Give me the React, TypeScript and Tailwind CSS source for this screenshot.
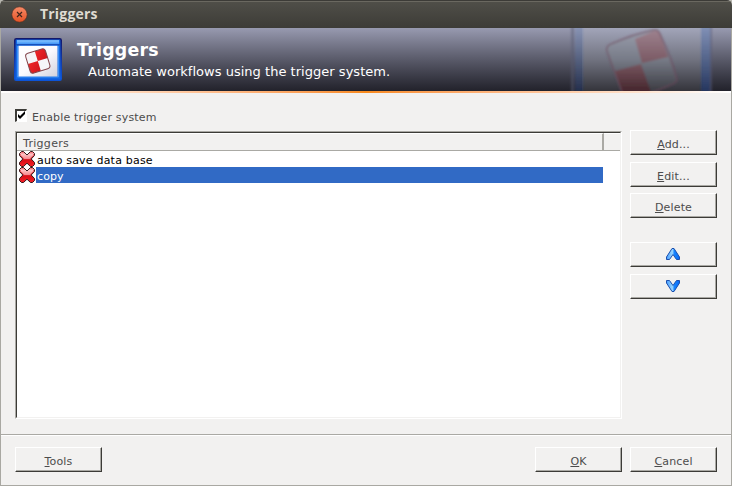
import type { ReactNode } from "react";

function Mnemonic({ text }: { text: string }) {
  return (
    <span className="tracking-[0.15px]">
      <span className="underline decoration-[#4c4c4c] decoration-1 underline-offset-1 [text-decoration-skip-ink:none]">{text[0]}</span>
      {text.slice(1)}
    </span>
  );
}

function Button({ children }: { children: ReactNode }) {
  return (
    <button className="h-[25px] w-[87px] shrink-0 border border-t-white border-r-[#3c3b37] border-b-[#3c3b37] border-l-white bg-[#f2f1f0]">
      <span className="flex h-full w-full items-center justify-center border-r border-b border-[#aaa9a4] pt-[4px] pl-px leading-[13px]">
        {children}
      </span>
    </button>
  );
}

function WindowIcon() {
  return (
    <svg width="48" height="43" viewBox="0 0 48 43">
      <defs>
        <linearGradient id="bar" x1="0" y1="0" x2="0" y2="1">
          <stop offset="0" stopColor="#8ccaff" />
          <stop offset="1" stopColor="#3b90f5" />
        </linearGradient>
        <linearGradient id="pane" x1="0" y1="0" x2="1" y2="1">
          <stop offset="0" stopColor="#ffffff" />
          <stop offset="0.5" stopColor="#fafaff" />
          <stop offset="1" stopColor="#d2d2dc" />
        </linearGradient>
        <linearGradient id="frame" x1="0" y1="0" x2="0" y2="1">
          <stop offset="0" stopColor="#14186a" />
          <stop offset="0.5" stopColor="#1238a4" />
          <stop offset="1" stopColor="#0c54d8" />
        </linearGradient>
        <linearGradient id="tile" x1="0" y1="0" x2="1" y2="1">
          <stop offset="0" stopColor="#ff3030" />
          <stop offset="1" stopColor="#c00d16" />
        </linearGradient>
      </defs>
      <rect x="0.8" y="0.8" width="46.4" height="41.4" rx="1.5" fill="#1266e4" stroke="url(#frame)" strokeWidth="1.6" />
      <rect x="3" y="2.2" width="42" height="4" fill="url(#bar)" />
      <rect x="2" y="6" width="44" height="1.3" fill="#1650bb" />
      <path d="M3.5 8v31h41V8" fill="none" stroke="#3d92f4" />
      <rect x="4.5" y="7.8" width="39" height="30.7" fill="url(#pane)" />
      <g transform="translate(23.8 23) rotate(-17)">
        <rect x="-10.3" y="-10.3" width="20.6" height="20.6" rx="3" fill="#f5f5f8" />
        <path d="M0-10.3h7.3a3 3 0 0 1 3 3V0H0zM0 10.3h-7.3a3 3 0 0 1-3-3V0H0z" fill="url(#tile)" />
        <rect x="-10.3" y="-10.3" width="20.6" height="20.6" rx="3" fill="none" stroke="#83454c" strokeWidth="1" />
      </g>
    </svg>
  );
}

function BannerArt() {
  return (
    <svg className="absolute top-0 right-0" width="162" height="63" viewBox="0 0 162 63">
      <defs>
        <linearGradient id="shade" x1="0" y1="0" x2="0" y2="1">
          <stop offset="0" stopColor="#a2a5b9" />
          <stop offset="0.5" stopColor="#717380" />
          <stop offset="1" stopColor="#34343b" />
        </linearGradient>
        <linearGradient id="edge" x1="0" y1="0" x2="0" y2="1">
          <stop offset="0" stopColor="#8394bb" />
          <stop offset="0.5" stopColor="#53658e" />
          <stop offset="1" stopColor="#20335f" />
        </linearGradient>
        <linearGradient id="red" gradientUnits="userSpaceOnUse" x1="0" y1="0" x2="0" y2="63">
          <stop offset="0" stopColor="#a08491" />
          <stop offset="0.55" stopColor="#795862" />
          <stop offset="1" stopColor="#46262d" />
        </linearGradient>
        <linearGradient id="pale" gradientUnits="userSpaceOnUse" x1="0" y1="0" x2="0" y2="63">
          <stop offset="0" stopColor="#9da1b0" />
          <stop offset="0.5" stopColor="#777b87" />
          <stop offset="1" stopColor="#3c3c43" />
        </linearGradient>
        <filter id="soft" x="-10%" y="-10%" width="120%" height="120%">
          <feGaussianBlur stdDeviation="0.9" />
        </filter>
      </defs>
      <rect x="13" width="120" height="63" fill="url(#shade)" />
      <g filter="url(#soft)">
        <rect x="2" y="-4" width="3" height="71" fill="#565976" opacity="0.5" />
        <rect x="6" y="-4" width="8" height="71" fill="url(#edge)" opacity="0.6" />
        <rect x="132" y="-4" width="9" height="71" fill="url(#edge)" opacity="0.9" />
        <rect x="141" y="-4" width="2" height="71" fill="#56597a" opacity="0.5" />
        <path d="M41 16L85 1Q89 0 91 5L107 49Q108 53 104 55L78 67H53L38 21Q38 18 41 16Z" fill="url(#pale)" />
        <path d="M66 11L85 3Q89 2 91 6L99 29L73 35Z" fill="url(#red)" />
        <path d="M46 43L72 36L83 67H54Z" fill="url(#red)" />
        <path d="M54 67L38 23Q37 18 42 16Q65 6 85 2Q89 1 91 6Q102 29 108 51Q108 54 104 56L80 66" fill="none" stroke="#70495d" strokeWidth="1.8" opacity="0.55" />
      </g>
    </svg>
  );
}

function DisabledMark() {
  return (
    <svg className="shrink-0" width="16" height="16" viewBox="0 0 16 16">
      <defs>
        <linearGradient id="cross" gradientUnits="userSpaceOnUse" x1="0" y1="0" x2="0" y2="16">
          <stop offset="0" stopColor="#ee3a44" />
          <stop offset="0.2" stopColor="#ffc4c6" />
          <stop offset="0.48" stopColor="#f58a90" />
          <stop offset="0.54" stopColor="#d80d16" />
          <stop offset="1" stopColor="#f5222a" />
        </linearGradient>
      </defs>
      <path d="M2.5.5h2L8 4l3.5-3.5h2l2 2v2L12.2 8l3.3 3.5v2l-2 2h-2L8 12.2l-3.5 3.3h-2l-2-2v-2L3.8 8 .5 4.5v-2z" fill="url(#cross)" stroke="#33181a" />
      <path d="M1.4 3.2v1.1L4.8 7.8M14.6 3.2v1.1L11.2 7.8" fill="none" stroke="#e0313a" strokeWidth="0.9" />
    </svg>
  );
}

function Arrow({ down = false }: { down?: boolean }) {
  return (
    <svg className="-mt-[4px] -ml-[2px]" width="14" height="12" viewBox="0 0 14 12">
      <defs>
        <linearGradient id="blue" x1="0" y1="0" x2="1" y2="0">
          <stop offset="0" stopColor="#439cff" />
          <stop offset="0.45" stopColor="#9bd6ff" />
          <stop offset="0.6" stopColor="#1684ff" />
          <stop offset="1" stopColor="#0869f5" />
        </linearGradient>
      </defs>
      <path
        d={down ? "M.5.5h3L7 5.5 10.5.5h3V3L8 11.5H6L.5 3z" : "M6 .5h2L13.5 9v2.5h-3L7 6.5l-3.5 5h-3V9z"}
        fill="url(#blue)"
        stroke="#1b4fae"
      />
    </svg>
  );
}

export default function App() {
  return (
    <div className="h-[486px] w-[732px] overflow-hidden bg-[#b9b8b0] font-['DejaVu_Sans',sans-serif] text-[11px] text-[#4c4c4c]">
      <div className="flex h-full flex-col overflow-hidden rounded-t-[5px] bg-[#f2f1f0]">
        <div className="flex h-7 shrink-0 items-center border-t border-[#3c3b37] bg-linear-to-b from-[#504f49] to-[#3d3c37] pl-[11px] shadow-[inset_0_1px_0_#6a6860]">
          <svg className="-mt-px" width="17" height="17" viewBox="0 0 17 17">
            <defs>
              <linearGradient id="close" x1="0" y1="0" x2="0" y2="1">
                <stop offset="0" stopColor="#f68b68" />
                <stop offset="1" stopColor="#e55225" />
              </linearGradient>
            </defs>
            <circle cx="8.5" cy="8.5" r="7.7" fill="url(#close)" stroke="#4b2c20" strokeWidth="0.6" />
            <path d="M6 6l5 5m0-5l-5 5" stroke="#40251c" strokeWidth="1.2" />
          </svg>
          <span className="-mt-px ml-3 font-['Open_Sans',sans-serif] text-sm leading-5 font-bold tracking-[0.2px] text-[#dfdbd2]">Triggers</span>
        </div>

        <div className="flex min-h-0 flex-1 flex-col border-r border-b border-l border-[#a9a8a2]">
          <header className="relative flex h-[63px] shrink-0 bg-linear-to-b from-[#989ab0] to-[#22222b] pt-2.5 pl-[13px] text-white">
            <BannerArt />
            <WindowIcon />
            <div className="ml-[15px] pt-px">
              <h1 className="text-[17.33px] leading-[22px] font-bold tracking-[0.25px]">Triggers</h1>
              <p className="ml-[11px] pt-px text-[13px] leading-5 tracking-[0.025px]">Automate workflows using the trigger system.</p>
            </div>
          </header>
          <div className="h-0.5 shrink-0 bg-linear-to-r from-white via-[#f88a1c] to-white" />

          <main className="flex h-[341px] shrink-0 flex-col pt-4 pl-3.5">
            <label className="flex h-[22px] items-start gap-[5px]">
              <span className="h-[13px] w-3 border-t-2 border-r border-b border-l-2 border-t-[#3c3b37] border-r-white border-b-white border-l-[#3c3b37] bg-white">
                <svg width="9" height="10" viewBox="0 0 9 10">
                  <path d="M1 3v3l2 2 5-5V0L3 5z" fill="black" />
                </svg>
              </span>
              <span className="pt-0.5 leading-[13px] tracking-[0.15px]">Enable trigger system</span>
            </label>
            <div className="flex">
              <div className="h-[288px] w-[607px] border border-t-[#aaa9a4] border-r-white border-b-white border-l-[#aaa9a4]">
                <div className="h-full border border-t-[#3c3b37] border-r-[#f2f1f0] border-b-[#f2f1f0] border-l-[#3c3b37] bg-white">
                  <div className="flex h-[18px] border-b border-[#aaa9a4] bg-[#f2f1f0]">
                    <div className="w-[587px] border-t border-r-2 border-l border-t-white border-r-[#aaa9a4] border-l-white pl-[5px] leading-[19px] tracking-[0.3px]">Triggers</div>
                    <div className="flex-1 border-t border-white" />
                  </div>
                  <div className="flex h-4 pl-0.5 text-black">
                    <DisabledMark />
                    <span className="w-[568px] pl-0.5 leading-[19px] tracking-[0.2px]">auto save data base</span>
                  </div>
                  <div className="flex h-4 pl-0.5 text-white">
                    <DisabledMark />
                    <span className="ml-px w-[567px] bg-[#316ac5] pl-px leading-[19px] tracking-[0.1px]">copy</span>
                  </div>
                </div>
              </div>
              <div className="-mt-px ml-2 flex flex-col">
                <Button><Mnemonic text="Add..." /></Button>
                <div className="mt-[7px] flex flex-col gap-1.5">
                  <Button><Mnemonic text="Edit..." /></Button>
                  <Button><Mnemonic text="Delete" /></Button>
                </div>
                <div className="mt-6 flex flex-col gap-[7px]">
                  <Button><Arrow /></Button>
                  <Button><Arrow down /></Button>
                </div>
              </div>
            </div>
          </main>
          <footer className="flex min-h-0 flex-1 border-t border-[#aaa9a4] pl-3.5 shadow-[inset_0_1px_0_white]">
            <div className="flex w-full pt-3">
              <Button><Mnemonic text="Tools" /></Button>
              <div className="mr-[14px] ml-auto flex gap-2">
                <Button><Mnemonic text="OK" /></Button>
                <Button><Mnemonic text="Cancel" /></Button>
              </div>
            </div>
          </footer>
        </div>
      </div>
    </div>
  );
}
